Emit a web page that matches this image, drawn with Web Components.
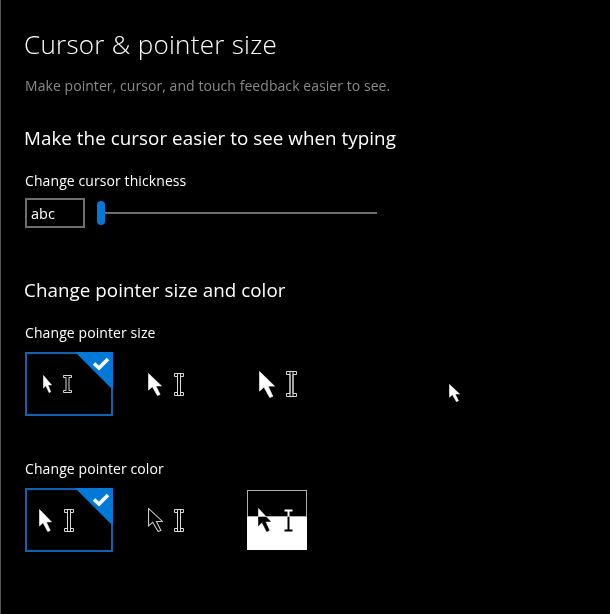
<!DOCTYPE html>
<html>
<head>
<meta charset="utf-8">
<title>Cursor & pointer size</title>
<style>
	html, body { margin: 0; background: #000; }
	body { font-family: "Open Sans", "Noto Sans", sans-serif; color: #fff; }
</style>
</head>
<body>
<settings-page>
	<page-text kind="title">Cursor &amp; pointer size</page-text>
	<page-text kind="desc">Make pointer, cursor, and touch feedback easier to see.</page-text>
	<page-text kind="heading" style="margin-top:30px">Make the cursor easier to see when typing</page-text>
	<page-text kind="label" style="margin-top:21px">Change cursor thickness</page-text>
	<thickness-slider text="abc"></thickness-slider>

	<page-text kind="heading" style="margin-top:50px">Change pointer size and color</page-text>
	<page-text kind="label" style="margin-top:21px">Change pointer size</page-text>
	<tile-row>
		<pointer-tile selected style="--pad:16px;--gap:11px">
			<arrow-icon w="9" h="18"></arrow-icon><beam-icon w="9" h="18"></beam-icon>
		</pointer-tile>
		<pointer-tile style="--pad:11px;--gap:12px">
			<arrow-icon w="14" h="23"></arrow-icon><beam-icon w="10" h="23"></beam-icon>
		</pointer-tile>
		<pointer-tile style="--pad:12px;--gap:11px">
			<arrow-icon w="16" h="27"></arrow-icon><beam-icon w="11" h="26"></beam-icon>
		</pointer-tile>
	</tile-row>

	<page-text kind="label" style="margin-top:43px">Change pointer color</page-text>
	<tile-row>
		<pointer-tile selected style="--pad:12px;--gap:12px">
			<arrow-icon w="13" h="23"></arrow-icon><beam-icon w="10" h="23"></beam-icon>
		</pointer-tile>
		<pointer-tile style="--pad:11px;--gap:11px">
			<arrow-icon w="15" h="24" outline></arrow-icon><beam-icon w="10" h="23"></beam-icon>
		</pointer-tile>
		<pointer-tile split style="--pad:11px;--gap:13px">
			<arrow-icon w="13" h="24" invert></arrow-icon><beam-icon w="9" h="23" invert></beam-icon>
		</pointer-tile>
	</tile-row>

	<arrow-icon w="11" h="18" style="position:absolute;left:448px;top:384px"></arrow-icon>
</settings-page>

<script>
class SettingsPage extends HTMLElement {
	constructor() {
		super();
		const shadow = this.attachShadow({mode: 'open'});
		shadow.innerHTML = `
			<style>
				:host {
					display: block;
					box-sizing: border-box;
					width: 610px;
					height: 614px;
					padding: 26px 0 0 24px;
					border-left: 1px solid #555;
					background: #000;
					position: relative;
					overflow: hidden;
				}
			</style>
			<slot></slot>`;
	}
}
customElements.define('settings-page', SettingsPage);

class PageText extends HTMLElement {
	constructor() {
		super();
		const shadow = this.attachShadow({mode: 'open'});
		shadow.innerHTML = `
			<style>
				:host { display: block; white-space: nowrap; color: #fff; }
				:host([kind="title"]) { font-size: 26px; line-height: 36px; font-weight: 300; letter-spacing: .28px; margin-left: -1px; }
				:host([kind="desc"]) { font-size: 14px; line-height: 20px; letter-spacing: .06px; color: #8a8a8a; margin-top: 14px; }
				:host([kind="heading"]) { font-size: 18.8px; line-height: 24px; letter-spacing: .05px; margin-left: -1px; }
				:host([kind="label"]) { font-size: 14px; line-height: 20px; letter-spacing: .09px; }
			</style>
			<slot></slot>`;
	}
}
customElements.define('page-text', PageText);

class ThicknessSlider extends HTMLElement {
	constructor() {
		super();
		const shadow = this.attachShadow({mode: 'open'});
		shadow.innerHTML = `
			<style>
				:host { display: flex; align-items: center; gap: 12px; margin-top: 7px; width: 352px; height: 30px; }
				.box {
					box-sizing: border-box;
					width: 60px;
					height: 30px;
					border: 2px solid #6e6e6e;
					padding-left: 4px;
					font-size: 14.5px;
					line-height: 28px;
					color: #fff;
				}
				.thumb { width: 8px; height: 24px; border-radius: 4px; background: #0078d7; flex: none; }
				.track { flex: 1; height: 2px; background: #6e6e6e; }
			</style>
			<div class="box"></div>
			<div class="thumb"></div>
			<div class="track" style="margin-left:-12px"></div>`;
	}

	connectedCallback() {
		this.shadowRoot.querySelector('.box').textContent = this.getAttribute('text');
	}
}
customElements.define('thickness-slider', ThicknessSlider);

class TileRow extends HTMLElement {
	constructor() {
		super();
		const shadow = this.attachShadow({mode: 'open'});
		shadow.innerHTML = `
			<style>
				:host { display: flex; gap: 22px; margin-top: 9px; }
			</style>
			<slot></slot>`;
	}
}
customElements.define('tile-row', TileRow);

class PointerTile extends HTMLElement {
	constructor() {
		super();
		const shadow = this.attachShadow({mode: 'open'});
		shadow.innerHTML = `
			<style>
				:host {
					display: block;
					position: relative;
					box-sizing: border-box;
					width: 88px;
					height: 64px;
					border: 2px solid transparent;
				}
				:host([selected]) { border-color: #0f62ae; }
				.inner {
					display: flex;
					align-items: center;
					gap: var(--gap);
					box-sizing: border-box;
					height: 100%;
					padding-left: var(--pad);
				}
				:host([split]) .inner {
					width: 60px;
					height: 60px;
					background: linear-gradient(#000 26px, #fff 26px);
				}
				.frame { display: none; }
				:host([split]) .frame {
					display: block;
					position: absolute;
					left: 0;
					top: 0;
					box-sizing: border-box;
					width: 60px;
					height: 27px;
					border: 1px solid #b0b0b0;
				}
				.corner { display: none; position: absolute; right: -2px; top: -2px; }
				:host([selected]) .corner { display: block; }
			</style>
			<div class="inner"><slot></slot></div>
			<div class="frame"></div>
			<svg class="corner" width="38" height="38" viewBox="0 0 38 38">
				<path d="M0 0H38V38Z" fill="#0078d7"/>
				<path d="M19 11.5L24 16L33 7" fill="none" stroke="#fff" stroke-width="3.6"/>
			</svg>`;
	}
}
customElements.define('pointer-tile', PointerTile);

// Both cursor glyphs scale their shape from the w and h attributes
class ArrowIcon extends HTMLElement {
	constructor() {
		super();
		this.attachShadow({mode: 'open'});
	}

	connectedCallback() {
		const w = this.getAttribute('w');
		const h = this.getAttribute('h');
		const outline = this.hasAttribute('outline');
		const invert = this.hasAttribute('invert');
		this.shadowRoot.innerHTML = `
			<style>
				:host { display: block; flex: none; line-height: 0; }
				svg { display: block; ${invert ? 'mix-blend-mode: difference;' : ''} }
			</style>
			<svg width="${w}" height="${h}" viewBox="0 0 11 20" preserveAspectRatio="none">
				<path d="M.4 .4V14.8L3.4 11.9L7.4 19.6L9.5 18.7L6.2 11.2H10.6Z"
					fill="${outline ? '#000' : '#fff'}"
					stroke="${outline ? '#c8c8c8' : '#fff'}"
					stroke-width="${outline ? .8 : .5}"/>
			</svg>`;
	}
}
customElements.define('arrow-icon', ArrowIcon);

class BeamIcon extends HTMLElement {
	constructor() {
		super();
		this.attachShadow({mode: 'open'});
	}

	connectedCallback() {
		const w = +this.getAttribute('w');
		const h = +this.getAttribute('h');
		const invert = this.hasAttribute('invert');
		const mid = w / 2;
		const half = invert ? 1 : 1.5;
		const cap = h > 20 && !invert ? 3 : 2;
		let d = `M.5 .5H${w - .5}V${cap + .5}H${mid + half}V${h - cap - .5}H${w - .5}V${h - .5}H.5V${h - cap - .5}H${mid - half}V${cap + .5}H.5Z`;
		// on the larger sizes the stem runs on through both caps
		if (h > 20 && !invert) {
			d += `M${mid - half} .5V${h - .5}M${mid + half} .5V${h - .5}`;
		}
		this.shadowRoot.innerHTML = `
			<style>
				:host { display: block; flex: none; line-height: 0; }
				svg { display: block; ${invert ? 'mix-blend-mode: difference;' : ''} }
			</style>
			<svg width="${w}" height="${h}" viewBox="0 0 ${w} ${h}">
				<path d="${d}" fill="${invert ? '#fff' : '#000'}" stroke="${invert ? 'none' : '#d8d8d8'}" stroke-width="1"/>
			</svg>`;
	}
}
customElements.define('beam-icon', BeamIcon);
</script>
</body>
</html>
